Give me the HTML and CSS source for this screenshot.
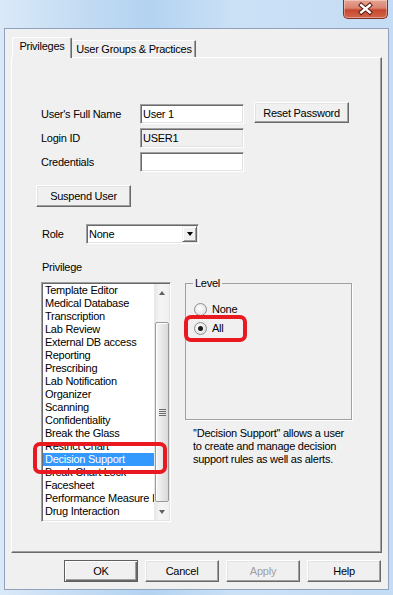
FILE: index.html
```html
<!DOCTYPE html>
<html lang="en">
<head>
  <meta charset="UTF-8" />
  <title>User Properties</title>
  <link rel="stylesheet" href="styles.css">
</head>
<body>
  <div class="window">
    <div class="titlebar">
      <button class="close-btn">
        <svg width="45" height="19" viewBox="0 0 45 19">
          <path d="M18 5 L27 12.5 M27 5 L18 12.5" stroke="#5a1d12" stroke-width="4.6" stroke-linecap="square" fill="none"/>
          <path d="M18 5 L27 12.5 M27 5 L18 12.5" stroke="#ffffff" stroke-width="2.6" stroke-linecap="square" fill="none"/>
        </svg>
      </button>
    </div>

    <div class="client">
      <div class="tabs">
        <div class="tab active">Privileges</div>
        <div class="tab">User Groups &amp; Practices</div>
      </div>

      <div class="panel">
        <div class="field-row">
          <label class="field-label">User's Full Name</label>
          <div class="textbox">User 1</div>
          <button class="btn reset-btn">Reset Password</button>
        </div>
        <div class="field-row">
          <label class="field-label">Login ID</label>
          <div class="textbox disabled">USER1</div>
        </div>
        <div class="field-row">
          <label class="field-label">Credentials</label>
          <div class="textbox"></div>
        </div>

        <button class="btn suspend-btn">Suspend User</button>

        <div class="role-row">
          <label class="role-label">Role</label>
          <div class="combo">
            <span class="combo-text">None</span>
            <span class="combo-drop"><span class="tri-down"></span></span>
          </div>
        </div>

        <div class="section-label">Privilege</div>

        <div class="lower">
          <div class="listbox">
            <div class="list-items">
              <div class="item">Template Editor</div>
              <div class="item">Medical Database</div>
              <div class="item">Transcription</div>
              <div class="item">Lab Review</div>
              <div class="item">External DB access</div>
              <div class="item">Reporting</div>
              <div class="item">Prescribing</div>
              <div class="item">Lab Notification</div>
              <div class="item">Organizer</div>
              <div class="item">Scanning</div>
              <div class="item">Confidentiality</div>
              <div class="item">Break the Glass</div>
              <div class="item">Restrict Chart</div>
              <div class="item selected">Decision Support</div>
              <div class="item">Break Chart Lock</div>
              <div class="item">Facesheet</div>
              <div class="item">Performance Measure I</div>
              <div class="item">Drug Interaction</div>
            </div>
            <div class="scrollbar">
              <div class="sb-arrow"><span class="arrow-up"></span></div>
              <div class="sb-track">
                <div class="sb-thumb">
                  <span class="grip"></span>
                </div>
              </div>
              <div class="sb-arrow"><span class="arrow-down"></span></div>
            </div>
          </div>

          <div class="right-col">
            <fieldset class="groupbox">
              <legend>Level</legend>
              <div class="radio-row"><span class="radio"></span>None</div>
              <div class="radio-row second"><span class="radio checked"></span>All</div>
            </fieldset>
            <p class="desc">''Decision Support'' allows a user to create and manage decision support rules as well as alerts.</p>
          </div>

          <div class="mark mark-list"></div>
          <div class="mark mark-radio"></div>
        </div>
      </div>

      <div class="footer">
        <button class="btn wide default">OK</button>
        <button class="btn wide">Cancel</button>
        <button class="btn wide" disabled>Apply</button>
        <button class="btn wide">Help</button>
      </div>
    </div>
  </div>
</body>
</html>
```

FILE: styles.css
```css
* { box-sizing: border-box; }
body {
  margin: 0;
  font-family: "Liberation Sans", Arial, sans-serif;
  font-size: 11px;
  letter-spacing: -0.25px;
  color: #000;
  overflow: hidden;
}
.window {
  width: 393px;
  height: 595px;
  background: linear-gradient(to right, #dae9f8 0%, #c2dbf3 22%, #b3d3f1 38%, #cbe1f6 60%, #c4dcf4 100%);
}
.titlebar {
  height: 28px;
  display: flex;
  justify-content: flex-end;
  padding-right: 5px;
}
.close-btn {
  width: 45px;
  height: 19px;
  padding: 0;
  border: 1px solid #7d3325;
  border-top: none;
  border-radius: 0 0 5px 5px;
  background: linear-gradient(to bottom, #e7a392 0%, #d98470 45%, #c6472d 55%, #d3664a 100%);
  box-shadow: inset 0 0 0 1px rgba(255, 255, 255, 0.35);
  display: flex;
}
.client {
  margin: 0 4px;
  height: 562px;
  background: #f0f0f0;
  border: 1px solid #8ea3bb;
  padding-top: 8px;
}
.tabs {
  display: flex;
  align-items: flex-end;
  height: 20px;
  margin-left: 7px;
  position: relative;
  z-index: 1;
}
.tab {
  height: 17px;
  width: 124px;
  line-height: 16px;
  text-align: center;
  background: #f0f0f0;
  border: 1px solid;
  border-color: #fff #696969 transparent #f0f0f0;
  border-bottom: none;
  box-shadow: inset -1px 0 0 #a0a0a0;
}
.tab.active {
  height: 21px;
  width: 60px;
  margin-bottom: -1px;
  line-height: 17px;
  border-left-color: #fff;
  border-radius: 2px 2px 0 0;
}
.panel {
  margin-left: 6px;
  width: 371px;
  height: 496px;
  border: 1px solid;
  border-color: #fff #696969 #696969 #fff;
  box-shadow: inset -1px -1px 0 #a0a0a0;
  padding: 46px 0 0 29px;
}
.field-row {
  display: flex;
  align-items: flex-start;
  height: 20px;
  margin-bottom: 4px;
}
.field-label {
  width: 99px;
  line-height: 20px;
}
.textbox, .combo, .listbox {
  border: 1px solid;
  border-color: #a0a0a0 #fff #fff #a0a0a0;
  box-shadow: inset 1px 1px 0 #696969, inset -1px -1px 0 #e3e3e3;
  background: #fff;
}
.textbox {
  width: 104px;
  height: 20px;
  padding: 0 2px;
  line-height: 18px;
}
.textbox.disabled {
  background: #f0f0f0;
}
.btn {
  font: inherit;
  letter-spacing: inherit;
  color: #000;
  background: #f0f0f0;
  border: 1px solid;
  border-color: #fff #696969 #696969 #fff;
  box-shadow: inset -1px -1px 0 #a0a0a0, inset 1px 1px 0 #e3e3e3;
  padding: 0;
  height: 22px;
}
.btn:disabled {
  color: #a0a0a0;
}
.btn.default {
  border-color: #5f5f5f;
  box-shadow: inset 1px 1px 0 #fff, inset -1px -1px 0 #696969, inset -2px -2px 0 #a0a0a0;
}
.reset-btn {
  width: 95px;
  height: 21px;
  margin: -2px 0 0 10px;
}
.suspend-btn {
  display: block;
  width: 95px;
  margin: 13px 0 0 -5px;
}
.role-row {
  display: flex;
  align-items: center;
  height: 20px;
  margin-top: 17px;
}
.role-label {
  width: 44px;
  margin-left: 1px;
}
.combo {
  width: 113px;
  height: 20px;
  padding: 1px 1px 1px 2px;
  display: flex;
  align-items: center;
  justify-content: space-between;
}
.combo-drop {
  width: 15px;
  height: 16px;
  border: 1px solid;
  border-color: #f0f0f0 #696969 #696969 #f0f0f0;
  box-shadow: inset 1px 1px 0 #fff, inset -1px -1px 0 #a0a0a0;
  background: #f0f0f0;
  display: flex;
  align-items: center;
  justify-content: center;
}
.tri-down {
  border-left: 3.5px solid transparent;
  border-right: 3.5px solid transparent;
  border-top: 4px solid #000;
}
.section-label {
  margin: 17px 0 0 1px;
  line-height: 13px;
}
.lower {
  position: relative;
  display: flex;
  gap: 14px;
  margin-top: 8px;
}
.listbox {
  width: 130px;
  height: 240px;
  padding: 1px;
  display: flex;
}
.list-items {
  flex: 1;
  overflow: hidden;
}
.item {
  height: 13px;
  line-height: 13px;
  padding-left: 2px;
  white-space: nowrap;
}
.item.selected {
  background: #3399ff;
  color: #fff;
}
.scrollbar {
  width: 15px;
  display: flex;
  flex-direction: column;
  background: linear-gradient(to right, #e6e6e6, #f4f4f4 40%, #f0f0f0);
}
.sb-arrow {
  height: 17px;
  display: flex;
  align-items: center;
  justify-content: center;
}
.arrow-up {
  border-left: 3.5px solid transparent;
  border-right: 3.5px solid transparent;
  border-bottom: 4px solid #606060;
}
.arrow-down {
  border-left: 3.5px solid transparent;
  border-right: 3.5px solid transparent;
  border-top: 4px solid #606060;
}
.sb-track {
  flex: 1;
  padding-top: 21px;
}
.sb-thumb {
  height: 180px;
  margin: 0 0 0 1px;
  border: 1px solid #9a9a9a;
  border-radius: 2px;
  background: linear-gradient(to right, #f6f6f6, #e8e8e8 50%, #d9d9d9);
  box-shadow: inset 1px 1px 0 #fff;
  display: flex;
  align-items: center;
  justify-content: center;
}
.grip {
  width: 7px;
  height: 7px;
  background: repeating-linear-gradient(to bottom, #6b6b6b 0, #6b6b6b 1px, transparent 1px, transparent 2px);
}
.right-col {
  width: 167px;
  margin-top: -5px;
}
.groupbox {
  margin: 0;
  height: 143px;
  padding: 12px 0 0 8px;
  border: 1px solid #a0a0a0;
  box-shadow: 1px 1px 0 #fff;
}
.groupbox legend {
  margin-left: -1px;
  padding: 0 2px;
  line-height: 13px;
}
.radio-row {
  display: flex;
  align-items: center;
  gap: 5px;
  height: 14px;
}
.radio-row.second {
  margin-top: 5px;
}
.radio {
  width: 13px;
  height: 13px;
  border-radius: 50%;
  border: 1px solid #8d8d8d;
  background: radial-gradient(circle at 40% 40%, #ffffff, #e4e4e4 70%, #d0d0d0);
  display: flex;
  align-items: center;
  justify-content: center;
}
.radio.checked::after {
  content: "";
  width: 5px;
  height: 5px;
  border-radius: 50%;
  background: #1b1b1b;
}
.desc {
  margin: 7px 0 0 8px;
  line-height: 13px;
  width: 160px;
}
.mark {
  position: absolute;
  border: 4px solid #e81a1f;
  border-radius: 7px;
}
.mark-list {
  left: -8px;
  top: 160px;
  width: 134px;
  height: 32px;
}
.mark-radio {
  left: 143px;
  top: 33px;
  width: 63px;
  height: 27px;
}
.footer {
  display: flex;
  justify-content: flex-end;
  gap: 7px;
  margin-top: 7px;
  padding-right: 7px;
}
.btn.wide {
  width: 74px;
}
```
